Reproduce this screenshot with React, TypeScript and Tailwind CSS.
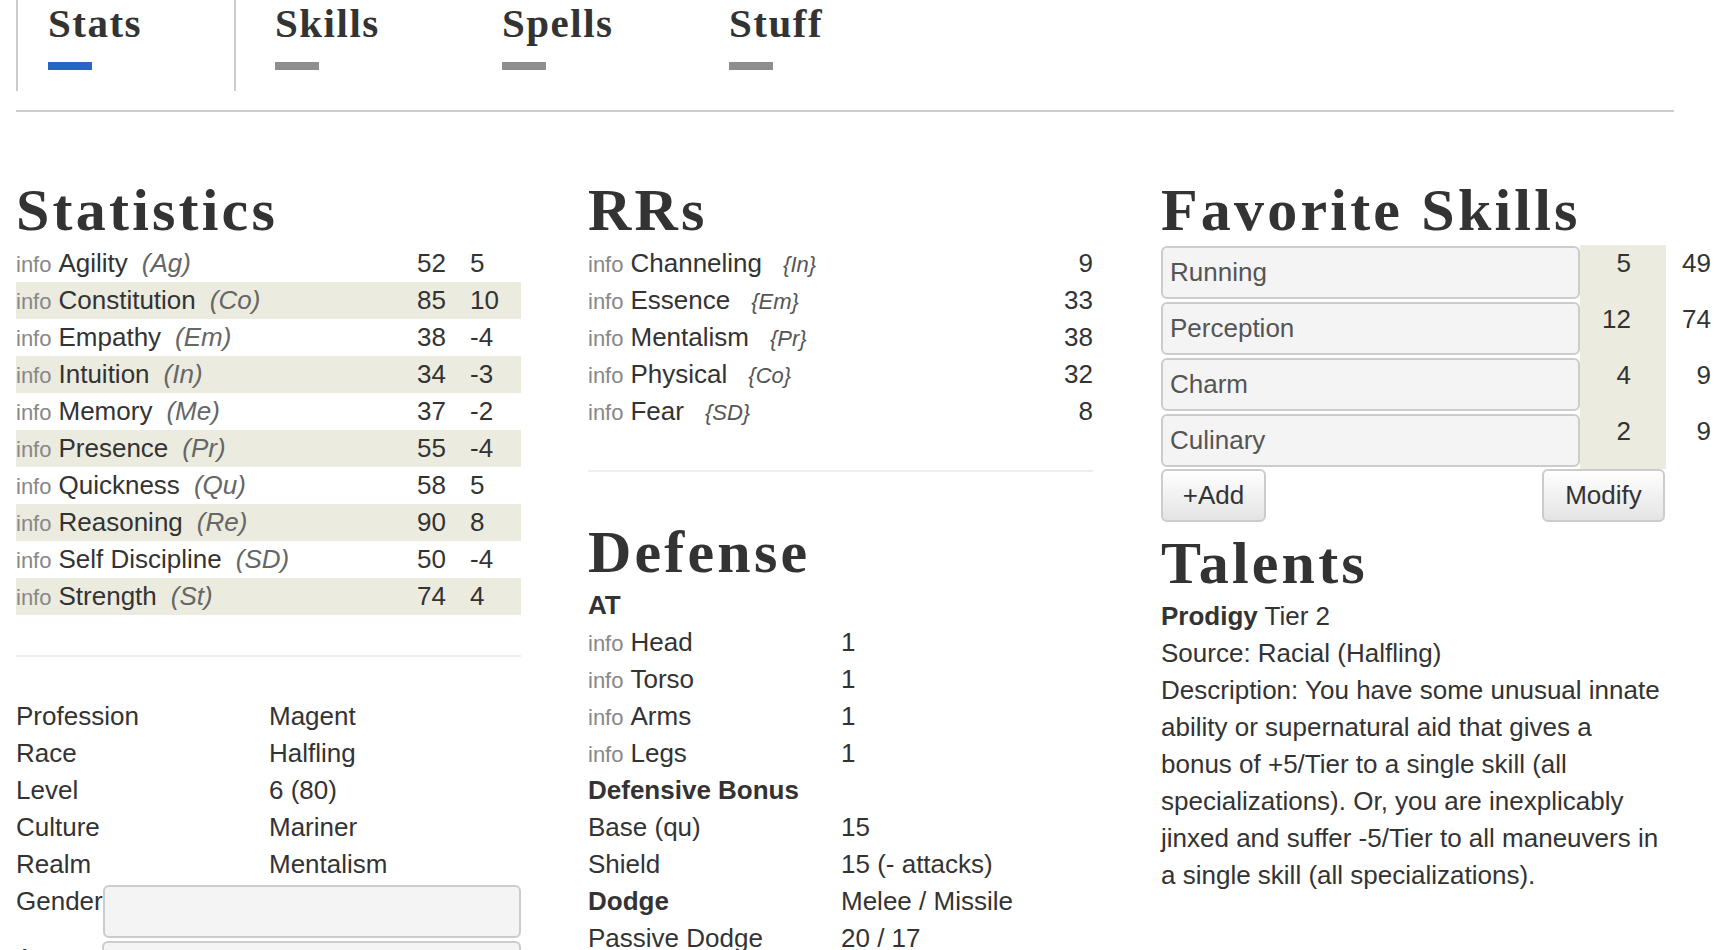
import React from "react";

const stats: [string, string, string, string][] = [
  ["Agility", "Ag", "52", "5"],
  ["Constitution", "Co", "85", "10"],
  ["Empathy", "Em", "38", "-4"],
  ["Intuition", "In", "34", "-3"],
  ["Memory", "Me", "37", "-2"],
  ["Presence", "Pr", "55", "-4"],
  ["Quickness", "Qu", "58", "5"],
  ["Reasoning", "Re", "90", "8"],
  ["Self Discipline", "SD", "50", "-4"],
  ["Strength", "St", "74", "4"],
];

const rrs: [string, string, string][] = [
  ["Channeling", "In", "9"],
  ["Essence", "Em", "33"],
  ["Mentalism", "Pr", "38"],
  ["Physical", "Co", "32"],
  ["Fear", "SD", "8"],
];

const bio: [string, string][] = [
  ["Profession", "Magent"],
  ["Race", "Halfling"],
  ["Level", "6 (80)"],
  ["Culture", "Mariner"],
  ["Realm", "Mentalism"],
];

const skills: [string, string, string][] = [
  ["Running", "5", "49"],
  ["Perception", "12", "74"],
  ["Charm", "4", "9"],
  ["Culinary", "2", "9"],
];

function Heading({ children, className = "" }: { children: React.ReactNode; className?: string }) {
  return (
    <h2
      className={`font-['Liberation_Serif',serif] font-bold text-[60px] leading-[60px] tracking-[3.2px] text-[#333] mb-[5px] ${className}`}
    >
      {children}
    </h2>
  );
}

function Info() {
  return <span className="text-[22px] text-[#888] mr-[7px]">info</span>;
}

function Tab({ label, active }: { label: string; active?: boolean }) {
  return (
    <div
      className={`w-[220px] mr-[7px] pl-[30px] pb-[21px] border-x-2 ${
        active ? "border-[#cccccc]" : "border-transparent"
      }`}
    >
      <div className="font-['Liberation_Serif',serif] font-bold text-[41px] leading-[46px] tracking-[1.5px] text-[#333]">
        {label}
      </div>
      <div className={`mt-[16px] h-[8px] w-[44px] ${active ? "bg-[#2a64c5]" : "bg-[#8e8e8e]"}`} />
    </div>
  );
}

export default function App() {
  return (
    <div className="w-[1734px] h-[950px] overflow-hidden bg-white text-[#333] font-['Liberation_Sans',Arial,sans-serif] text-[26px] leading-[37px]">
      {/* Tabs */}
      <div className="pl-[16px]">
        <div className="flex">
          <Tab label="Stats" active />
          <Tab label="Skills" />
          <Tab label="Spells" />
          <Tab label="Stuff" />
        </div>
        <div className="mt-[19px] h-[2px] w-[1658px] bg-[#cccccc]" />
      </div>

      {/* Columns */}
      <div className="flex pl-[16px] mt-[68px]">
        {/* Left column */}
        <div className="w-[505px] shrink-0">
          <Heading>Statistics</Heading>
          <div>
            {stats.map(([name, ab, v, b], i) => (
              <div
                key={name}
                className={`flex items-baseline h-[37px] ${i % 2 === 1 ? "bg-[#ecebdf]" : ""}`}
              >
                <div className="w-[401px] flex items-baseline whitespace-nowrap">
                  <Info />
                  <span>{name}</span>
                  <span className="italic text-[#666] ml-[14px]">({ab})</span>
                </div>
                <div className="w-[53px]">{v}</div>
                <div>{b}</div>
              </div>
            ))}
          </div>
          <div className="mt-[40px] h-[2px] bg-[#eeeeee]" />
          <div className="mt-[41px]">
            {bio.map(([k, v]) => (
              <div key={k} className="flex h-[37px]">
                <div className="w-[253px]">{k}</div>
                <div>{v}</div>
              </div>
            ))}
            <div className="flex items-start h-[57px]">
              <div>Gender</div>
              <div className="flex-1 mt-[2px] h-[53px] bg-[#f4f4f4] border-2 border-[#cccccc] rounded-[6px]" />
            </div>
            <div className="flex items-start h-[57px]">
              <div className="w-[86px]">Age</div>
              <div className="flex-1 mt-[1px] h-[53px] bg-[#f4f4f4] border-2 border-[#cccccc] rounded-[6px]" />
            </div>
          </div>
        </div>

        {/* Middle column */}
        <div className="w-[505px] shrink-0 ml-[67px]">
          <Heading>RRs</Heading>
          <div>
            {rrs.map(([name, ab, v]) => (
              <div key={name} className="flex items-baseline justify-between h-[37px]">
                <div className="flex items-baseline whitespace-nowrap">
                  <Info />
                  <span>{name}</span>
                  <span className="italic text-[22px] text-[#555] ml-[21px]">{`{${ab}}`}</span>
                </div>
                <div>{v}</div>
              </div>
            ))}
          </div>
          <div className="mt-[40px] h-[2px] bg-[#eeeeee]" />
          <Heading className="mt-[50px]">Defense</Heading>
          <div>
            <div className="h-[37px] font-bold">AT</div>
            {["Head", "Torso", "Arms", "Legs"].map((p) => (
              <div key={p} className="flex items-baseline h-[37px]">
                <div className="w-[253px] flex items-baseline">
                  <Info />
                  <span>{p}</span>
                </div>
                <div>1</div>
              </div>
            ))}
            <div className="h-[37px] font-bold">Defensive Bonus</div>
            <div className="flex h-[37px]">
              <div className="w-[253px]">Base (qu)</div>
              <div>15</div>
            </div>
            <div className="flex h-[37px]">
              <div className="w-[253px]">Shield</div>
              <div>15 (- attacks)</div>
            </div>
            <div className="flex h-[37px]">
              <div className="w-[253px] font-bold">Dodge</div>
              <div>Melee / Missile</div>
            </div>
            <div className="flex h-[37px]">
              <div className="w-[253px]">Passive Dodge</div>
              <div>20 / 17</div>
            </div>
          </div>
        </div>

        {/* Right column */}
        <div className="w-[505px] shrink-0 ml-[68px]">
          <Heading className="mb-[4px]">Favorite Skills</Heading>
          <div>
            {skills.map(([name, a, b]) => (
              <div key={name} className="flex h-[56px]">
                <div className="w-[419px] shrink-0">
                  <div className="mt-[1px] h-[53px] bg-[#f4f4f4] border-2 border-[#cccccc] rounded-[6px] pl-[7px] flex items-center text-[#555]">
                    {name}
                  </div>
                </div>
                <div className="w-[86px] shrink-0 bg-[#ecebdf] text-right pr-[35px]">{a}</div>
                <div className="w-[45px] shrink-0 text-right">{b}</div>
              </div>
            ))}
          </div>
          <div className="flex justify-between w-[505px]">
            <button className="w-[105px] h-[53px] rounded-[6px] border-2 border-[#cccccc] bg-linear-to-b from-white to-[#e4e4e4] text-[#333] text-[26px]">
              +Add
            </button>
            <button className="w-[123px] h-[53px] mr-[1px] rounded-[6px] border-2 border-[#cccccc] bg-linear-to-b from-white to-[#e4e4e4] text-[#333] text-[26px]">
              Modify
            </button>
          </div>
          <Heading className="mt-[11px]">Talents</Heading>
          <div>
            <div>
              <span className="font-bold">Prodigy</span> Tier 2
            </div>
            <div>Source: Racial (Halfling)</div>
            <div>
              Description: You have some unusual innate ability or supernatural aid that gives a bonus of
              +5/Tier to a single skill (all specializations). Or, you are inexplicably jinxed and suffer
              -5/Tier to all maneuvers in a single skill (all specializations).
            </div>
          </div>
        </div>
      </div>
    </div>
  );
}
